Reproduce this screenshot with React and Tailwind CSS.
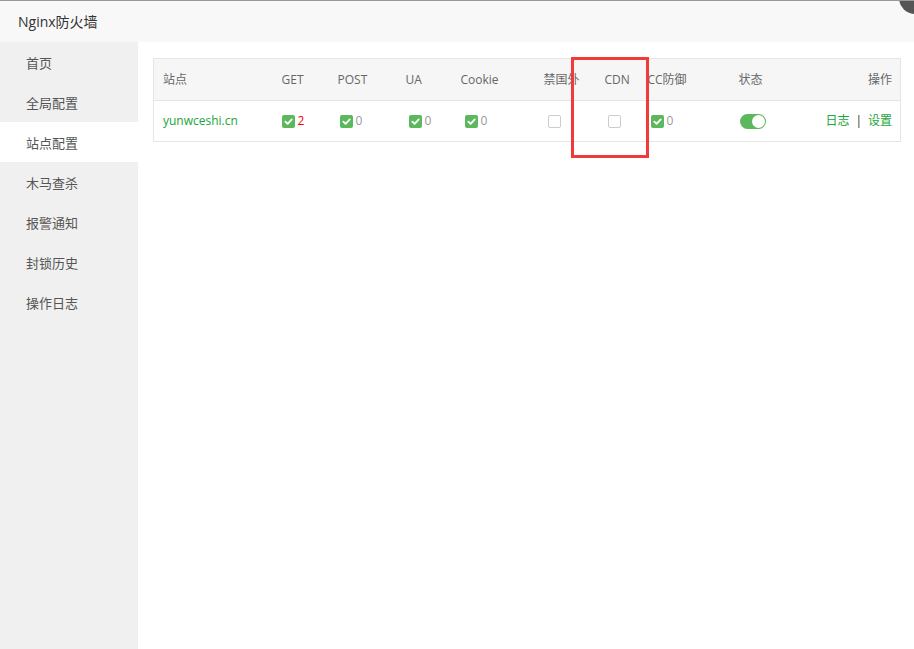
import React from 'react';

const MENU = ['首页', '全局配置', '站点配置', '木马查杀', '报警通知', '封锁历史', '操作日志'];

function Check({ on }) {
  if (!on) {
    return <span className="inline-block w-[13px] h-[13px] border border-[#ccc] rounded-[2px] bg-white align-middle" />;
  }
  return (
    <span className="inline-flex w-[13px] h-[13px] rounded-[2px] bg-[#5cb85c] items-center justify-center align-middle">
      <svg width="9" height="9" viewBox="0 0 10 10">
        <path d="M1.5 5.2 L4 7.6 L8.6 2.6" fill="none" stroke="#fff" strokeWidth="2" strokeLinecap="round" strokeLinejoin="round" />
      </svg>
    </span>
  );
}

function Count({ n, red }) {
  return <span className={`ml-[3px] align-middle text-[12px] ${red ? 'text-[#ff0000]' : 'text-[#999]'}`}>{n}</span>;
}

export default function App() {
  return (
    <div
      className="relative w-[914px] h-[649px] overflow-hidden bg-white border-t border-[#999] flex flex-col"
      style={{ fontFamily: '"Open Sans", "Noto Sans CJK SC", sans-serif' }}
    >
      {/* title bar */}
      <div className="h-[41px] shrink-0 bg-[#f8f8f8] flex items-center pl-[18px] text-[14px] text-[#333]">
        Nginx防火墙
      </div>
      <div className="absolute right-[-17px] top-[-19px] w-[32px] h-[32px] rounded-full bg-[#555]" />

      <div className="flex flex-1 min-h-0">
        {/* sidebar */}
        <aside className="w-[138px] shrink-0 bg-[#f0f0f0] flex flex-col">
          {MENU.map((m) => (
            <div
              key={m}
              className={`h-[40px] flex items-center pl-[26px] pt-[3px] text-[13px] text-[#555] ${m === '站点配置' ? 'bg-white' : ''}`}
            >
              {m}
            </div>
          ))}
        </aside>

        {/* main */}
        <main className="flex-1 pt-[16px] pl-[15px] pr-[13px]">
          <table className="w-[748px] border border-[#e5e5e5] border-collapse text-[12px] text-[#666] table-fixed">
            <colgroup>
              <col className="w-[119px]" />
              <col className="w-[56px]" />
              <col className="w-[68px]" />
              <col className="w-[55px]" />
              <col className="w-[83px]" />
              <col className="w-[61px]" />
              <col className="w-[43px]" />
              <col className="w-[91px]" />
              <col className="w-[80px]" />
              <col />
            </colgroup>
            <thead>
              <tr className="h-[42px] bg-[#f6f6f6] border-b border-[#e5e5e5]">
                <th className="font-normal text-left pl-[9px]">站点</th>
                <th className="font-normal text-left pl-[9px]">GET</th>
                <th className="font-normal text-left pl-[9px]">POST</th>
                <th className="font-normal text-left pl-[9px]">UA</th>
                <th className="font-normal text-left pl-[9px]">Cookie</th>
                <th className="font-normal text-left pl-[9px] whitespace-nowrap">禁国外</th>
                <th className="font-normal text-left pl-[9px]">CDN</th>
                <th className="font-normal text-left pl-[9px] whitespace-nowrap">CC防御</th>
                <th className="font-normal text-left pl-[9px]">状态</th>
                <th className="font-normal text-right pr-[8px]">操作</th>
              </tr>
            </thead>
            <tbody>
              <tr className="h-[41px]">
                <td className="pl-[9px] text-[#20a53a] text-[12px]">yunwceshi.cn</td>
                <td className="pl-[9px]"><Check on /><Count n="2" red /></td>
                <td className="pl-[11px]"><Check on /><Count n="0" /></td>
                <td className="pl-[12px]"><Check on /><Count n="0" /></td>
                <td className="pl-[13px]"><Check on /><Count n="0" /></td>
                <td className="pl-[13px]"><Check /></td>
                <td className="pl-[12px]"><Check /></td>
                <td className="pl-[12px]"><Check on /><Count n="0" /></td>
                <td className="pl-[10px]">
                  <span className="inline-flex w-[26px] h-[15px] rounded-full bg-[#5cb85c] items-center justify-end pr-[1px] align-middle">
                    <span className="w-[13px] h-[13px] rounded-full bg-white" />
                  </span>
                </td>
                <td className="text-right pr-[8px] text-[12px] whitespace-nowrap">
                  <span className="text-[#20a53a]">日志</span>
                  <span className="text-[#333] mx-[6px]">|</span>
                  <span className="text-[#20a53a]">设置</span>
                </td>
              </tr>
            </tbody>
          </table>
        </main>
      </div>

      {/* annotation box */}
      <div className="absolute left-[571px] top-[56px] w-[78px] h-[101px] border-[3px] border-[#f23a3a] pointer-events-none" />
    </div>
  );
}
